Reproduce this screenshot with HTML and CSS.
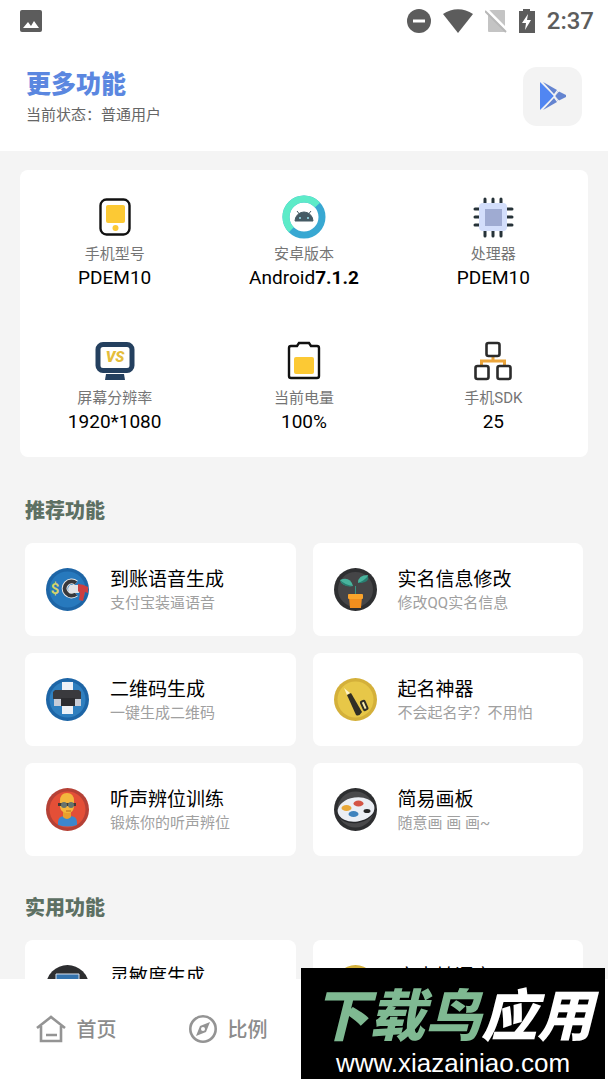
FILE: index.html
```html
<!DOCTYPE html>
<html lang="zh-CN">
<head>
  <meta charset="UTF-8">
  <meta name="viewport" content="width=device-width, initial-scale=1.0">
  <title>更多功能</title>
  <link rel="stylesheet" href="styles.css">
</head>
<body>
  <div class="status-bar">
    <svg class="status-photo" width="22" height="22" viewBox="0 0 22 22"><rect width="22" height="22" rx="2" fill="#5c5c5c"/><path d="M3 18l5-6 3 4 3-5 5 7z" fill="#fff"/></svg>
    <div class="status-icons">
      <svg width="24" height="24" viewBox="0 0 24 24"><circle cx="12" cy="12" r="12" fill="#5c5c5c"/><path d="M6 12h12" stroke="#fff" stroke-width="3"/></svg>
      <svg width="30" height="24" viewBox="0 0 30 24"><path d="M0 5C9-1.500 21-1.500 30 5L15 24z" fill="#5c5c5c"/></svg>
      <svg width="22" height="24" viewBox="0 0 22 24"><path d="M9 1h10q1 0 1 1v20q0 1-1 1H4q-1 0-1-1V4q0-3 3-3z" fill="#c4c4c4"/><path d="M1 0l22 22" stroke="#fff" stroke-width="3"/><path d="M0 2l21 21" stroke="#b8b8b8" stroke-width="2"/></svg>
      <svg width="16" height="24" viewBox="0 0 16 24"><path d="M4 0h7v2h5v22H0V2h4z" fill="#5c5c5c"/><path d="M9 5l-6 9h4l-1 7 6-10H8z" fill="#fff"/></svg>
      <span class="time">2:37</span>
    </div>
  </div>

  <header class="header">
    <div>
      <h1>更多功能</h1>
      <p>当前状态：普通用户</p>
    </div>
    <button type="button" class="play-button" aria-label="应用商店">
      <svg width="26" height="30" viewBox="0 0 26 30">
        <path d="M0 1l14 14L0 29z" fill="#5186f2"/>
        <path d="M3 1l14 8-3 4zM3 29l14-8-3-4zM18 10l8 4v2l-8 4-3-5z" fill="#6484d0"/>
        <path d="M1 0l18 20M2 29L19 10" stroke="#f3f3f3" stroke-width="1"/>
      </svg>
    </button>
  </header>

  <main class="content">
    <section class="info-card">
      <div class="info-item">
        <svg width="44" height="44" viewBox="0 0 44 44"><rect x="7.500" y="4.500" width="29" height="35" rx="6" fill="#fff" stroke="#111" stroke-width="2.400"/><rect x="13" y="10" width="19" height="18" rx="2" fill="#fcc934"/><circle cx="22.500" cy="33" r="3" fill="#fcc934"/></svg>
        <span class="info-label">手机型号</span>
        <span class="info-value">PDEM10</span>
      </div>
      <div class="info-item">
        <svg width="44" height="44" viewBox="0 0 44 44">
          <circle cx="22" cy="22" r="18" fill="none" stroke="#38a8d2" stroke-width="7"/>
          <circle cx="22" cy="22" r="18" fill="none" stroke="#5debc8" stroke-width="7" pathLength="100" stroke-dasharray="51 49" transform="rotate(135 22 22)"/>
          <path d="M13 26a9 9 0 0 1 18 0zM15 16l4 5M29 16l-4 5" fill="#455a64" stroke="#455a64" stroke-width="1"/>
          <circle cx="18" cy="23" r="1" fill="#9be4ef"/><circle cx="26" cy="23" r="1" fill="#9be4ef"/>
        </svg>
        <span class="info-label">安卓版本</span>
        <span class="info-value">Android<b>7.1.2</b></span>
      </div>
      <div class="info-item">
        <svg width="44" height="44" viewBox="0 0 44 44"><path d="M14 4v5M22 4v5M30 4v5M14 36v5M22 36v5M30 36v5M4 14h5M4 22h5M4 30h5M36 14h5M36 22h5M36 30h5" stroke="#263238" stroke-width="3" stroke-linecap="round"/><rect x="8" y="8" width="28" height="28" rx="4" fill="#d3defb"/><path d="M14 14h17v17H14z" fill="#9fabd2"/></svg>
        <span class="info-label">处理器</span>
        <span class="info-value">PDEM10</span>
      </div>
      <div class="info-item">
        <svg width="44" height="44" viewBox="0 0 44 44"><rect x="5" y="5.500" width="34" height="26" rx="5" fill="#fff" stroke="#24405f" stroke-width="5"/><path d="M13 35h18l1 6H12z" fill="#24405f"/><text x="22" y="23" text-anchor="middle" class="vs-text">VS</text></svg>
        <span class="info-label">屏幕分辨率</span>
        <span class="info-value">1920*1080</span>
      </div>
      <div class="info-item">
        <svg width="44" height="44" viewBox="0 0 44 44"><path d="M9 7h6l2-3h10l2 3h6q2 0 2 2v28q0 2-2 2H9q-2 0-2-2V9q0-2 2-2z" fill="#fff" stroke="#111" stroke-width="2.400"/><rect x="12" y="18" width="20" height="17" rx="2" fill="#fcc934"/></svg>
        <span class="info-label">当前电量</span>
        <span class="info-value">100%</span>
      </div>
      <div class="info-item">
        <svg width="44" height="44" viewBox="0 0 44 44"><path d="M22 17v5M10.500 28v-6h23v6" fill="none" stroke="#eba53b" stroke-width="3"/><g fill="#fff" stroke="#2b2b2b" stroke-width="2.600"><rect x="15.500" y="4" width="13" height="13" rx="2"/><rect x="4.500" y="27" width="13" height="13" rx="2"/><rect x="26.500" y="27" width="13" height="13" rx="2"/></g></svg>
        <span class="info-label">手机SDK</span>
        <span class="info-value">25</span>
      </div>
    </section>

    <section class="features">
      <h2>推荐功能</h2>
      <div class="feature-grid">
        <a href="#voice" class="feature-card">
          <svg width="43" height="43" viewBox="0 0 43 43"><circle cx="21.500" cy="21.500" r="21.500" fill="#1d65a6"/><circle cx="21.500" cy="21.500" r="18" fill="#2779bd"/><text x="9" y="26" text-anchor="middle" class="dollar-text">$</text><path d="M30 15a7 7 0 1 0 0 11" fill="none" stroke="#e8e8e8" stroke-width="6"/><path d="M30 15a7 7 0 1 0 0 11" fill="none" stroke="#38383b" stroke-width="4"/><path d="M24 17h9v8h-9q-4-4 0-8z" fill="#e3e3e6"/><path d="M32 16q5 0 10 3v6l-3-1-2 9-4-1 1-7-2-2z" fill="#cc3f40"/></svg>
          <div><h3>到账语音生成</h3><p>支付宝装逼语音</p></div>
        </a>
        <a href="#realname" class="feature-card">
          <svg width="43" height="43" viewBox="0 0 43 43"><circle cx="21.500" cy="21.500" r="21.500" fill="#2e2f31"/><circle cx="21.500" cy="21.500" r="17.500" fill="#454547"/><path d="M21.500 27v-9" stroke="#369483" stroke-width="1"/><path d="M19 18Q8 19 6 12q10-4 13 6z" fill="#48b39d"/><path d="M24 15q0-8 10-8 0 7-10 8z" fill="#48b39d"/><path d="M6 12q5 5 13 6-10 2-13-6zM24 15q6-2 10-7 2 7-10 7z" fill="#287d70"/><path d="M15 29h13l-1 11H16z" fill="#f18e1e"/><rect x="14" y="26" width="15" height="5" rx="1" fill="#fba42b"/></svg>
          <div><h3>实名信息修改</h3><p>修改QQ实名信息</p></div>
        </a>
        <a href="#qrcode" class="feature-card">
          <svg width="43" height="43" viewBox="0 0 43 43"><circle cx="21.500" cy="21.500" r="21.500" fill="#1d65a6"/><circle cx="21.500" cy="21.500" r="18" fill="#2f7fbf"/><path d="M8 20h27v8H8z" fill="#c7ccd7"/><path d="M9 12h24l2 2v7H7v-7z" fill="#3a3a3e"/><path d="M15 20h14v8H15z" fill="#2c2c30"/><path d="M16 4h11v8H16zM16 28h11v8H16z" fill="#edf1f7"/></svg>
          <div><h3>二维码生成</h3><p>一键生成二维码</p></div>
        </a>
        <a href="#name" class="feature-card">
          <svg width="43" height="43" viewBox="0 0 43 43"><circle cx="21.500" cy="21.500" r="21.500" fill="#d4b03a"/><circle cx="21.500" cy="21.500" r="18" fill="#e7c748"/><path d="M10 10l6 5-3 2z" fill="#fff3c4"/><path d="M13 17l4-2 11 19q-3 5-6 3z" fill="#302e25"/><rect x="28" y="23" width="4" height="9" rx="1" fill="#f6e9a8" stroke="#302e25" stroke-width="2" transform="rotate(-24 30 27)"/></svg>
          <div><h3>起名神器</h3><p>不会起名字？不用怕</p></div>
        </a>
        <a href="#listen" class="feature-card">
          <svg width="43" height="43" viewBox="0 0 43 43"><circle cx="21.500" cy="21.500" r="21.500" fill="#b54136"/><circle cx="21.500" cy="21.500" r="18" fill="#e44f37"/><path d="M12 37v-3q0-6 7-6h5q7 0 7 6v3q-9 3-19 0z" fill="#3d87cd"/><path d="M17 20h8v9q-4 4-8 0z" fill="#e9a02e"/><path d="M14 13q0-8 7-8t7 8v6q-1 6-6 6-7 0-8-6z" fill="#f3b63d"/><path d="M12 15h18v3H12z" fill="#433b35"/><circle cx="18" cy="17" r="3" fill="#65736d"/><circle cx="25" cy="17" r="3" fill="#65736d"/><path d="M20 23h5" stroke="#b56922"/></svg>
          <div><h3>听声辨位训练</h3><p>锻炼你的听声辨位</p></div>
        </a>
        <a href="#draw" class="feature-card">
          <svg width="43" height="43" viewBox="0 0 43 43"><circle cx="21.500" cy="21.500" r="21.500" fill="#2d2e30"/><circle cx="21.500" cy="21.500" r="18" fill="#49494b"/><ellipse cx="22" cy="23" rx="18.500" ry="12" fill="#26272a" transform="rotate(-8 22 23)"/><ellipse cx="22" cy="21.500" rx="18.500" ry="12" fill="#ebeef4" transform="rotate(-8 22 21)"/><ellipse cx="12.500" cy="20" rx="5" ry="3" fill="#e9a839"/><ellipse cx="24.500" cy="15.500" rx="5" ry="3" fill="#d45445"/><ellipse cx="19.500" cy="26" rx="5" ry="3" fill="#3e82bd"/><ellipse cx="33" cy="23" rx="3.500" ry="2" fill="#252526"/></svg>
          <div><h3>简易画板</h3><p>随意画 画 画~</p></div>
        </a>
      </div>
    </section>

    <section class="features">
      <h2>实用功能</h2>
      <div class="feature-grid">
        <a href="#sensitivity" class="feature-card">
          <svg width="43" height="43" viewBox="0 0 43 43"><circle cx="21.500" cy="21.500" r="21.500" fill="#2d2e30"/><path d="M10 9h23v20H10z" fill="#3473ad" stroke="#d9e2ed"/></svg>
          <div><h3>灵敏度生成</h3></div>
        </a>
        <a href="#speech" class="feature-card">
          <svg width="43" height="43" viewBox="0 0 43 43"><circle cx="21.500" cy="21.500" r="21.500" fill="#d4b03a"/><circle cx="21.500" cy="21.500" r="18" fill="#e7c748"/></svg>
          <div><h3>文本转语音</h3></div>
        </a>
      </div>
    </section>
  </main>

  <nav class="bottom-nav">
    <a href="#home">
      <svg width="30" height="28" viewBox="0 0 30 28" fill="none" stroke="#949494" stroke-width="2.600"><path d="M1 13L15 2l14 11M5 11v15h20V11M10 20h11"/></svg>
      首页
    </a>
    <a href="#scale">
      <svg width="28" height="28" viewBox="0 0 28 28"><circle cx="14" cy="14" r="12.700" fill="none" stroke="#949494" stroke-width="2.600"/><path d="M21 7l-4 10-10 4 4-10z" fill="#949494"/><circle cx="14" cy="14" r="2" fill="#fff"/></svg>
      比例
    </a>
  </nav>

  <div class="watermark">
    <strong><span>下载鸟</span>应用</strong>
    <small>www.xiazainiao.com</small>
  </div>
</body>
</html>
```

FILE: styles.css
```css
* {
  box-sizing: border-box;
}

body {
  font-family: Roboto, "Noto Sans CJK SC", sans-serif;
  background: #f4f4f4;
  color: #000;
  margin: 0;
  height: 100vh;
  display: flex;
  flex-direction: column;
}

h1, h2, h3, p {
  margin: 0;
}

a {
  color: inherit;
  text-decoration: none;
}

svg {
  display: block;
  flex-shrink: 0;
}

/* top */
.status-bar {
  display: flex;
  justify-content: space-between;
  align-items: center;
  height: 41px;
  padding: 0 14px 0 20px;
  background: #fff;
  flex-shrink: 0;
}

.status-icons {
  display: flex;
  align-items: center;
  gap: 12px;
}

.time {
  color: #5c5c5c;
  font-size: 24px;
  font-weight: 500;
  line-height: 42px;
}

.header {
  display: flex;
  justify-content: space-between;
  align-items: center;
  padding: 24px 26px;
  background: #fff;
  flex-shrink: 0;
}

.header h1 {
  margin-top: 2px;
  color: #5b87e0;
  font-size: 25px;
  font-weight: 900;
  line-height: 36px;
}

.header p {
  color: #666;
  font-size: 15px;
  line-height: 24px;
}

.play-button {
  display: flex;
  align-items: center;
  justify-content: center;
  width: 59px;
  height: 59px;
  padding: 0;
  border: none;
  border-radius: 14px;
  background: #f3f3f3;
  cursor: pointer;
}

/* device info */
.content {
  flex: 1;
  min-height: 0;
  padding: 19px 20px 0;
  overflow-y: auto;
  scrollbar-width: none;
}

.info-card {
  display: grid;
  grid-template-columns: repeat(3, 1fr);
  row-gap: 49px;
  padding: 25px 0 23px;
  margin-bottom: 40px;
  border-radius: 8px;
  background: #fff;
}

.info-item {
  display: flex;
  flex-direction: column;
  align-items: center;
}

.info-label {
  margin-top: 3px;
  color: #757575;
  font-size: 15px;
  line-height: 24px;
}

.info-value {
  font-size: 19px;
  line-height: 24px;
}

.vs-text {
  fill: #e5bd3a;
  font-size: 15px;
  font-weight: 900;
  font-style: italic;
}

.dollar-text {
  fill: #d5d36b;
  font-size: 15px;
  font-weight: 700;
}

/* feature lists */
.features {
  padding: 0 5px;
  margin-bottom: 38px;
}

.features h2 {
  margin-bottom: 18px;
  color: #5d7063;
  font-size: 20px;
  font-weight: 900;
  line-height: 28px;
}

.feature-grid {
  display: grid;
  grid-template-columns: repeat(2, 1fr);
  gap: 17px;
}

.feature-card {
  display: flex;
  align-items: flex-start;
  gap: 21px;
  height: 93px;
  padding: 25px 21px 0;
  border-radius: 8px;
  background: #fff;
}

.feature-card h3 {
  font-size: 19px;
  font-weight: 400;
  line-height: 24px;
}

.feature-card p {
  color: #a0a0a0;
  font-size: 15px;
  line-height: 22px;
}

/* bottom */
.bottom-nav {
  display: grid;
  grid-template-columns: repeat(4, 1fr);
  height: 101px;
  padding-bottom: 2px;
  background: #fff;
  flex-shrink: 0;
}

.bottom-nav a {
  display: flex;
  align-items: center;
  justify-content: center;
  gap: 11px;
  color: #8c8c8c;
  font-size: 20px;
  font-weight: 500;
}

.watermark {
  position: fixed;
  right: 3px;
  bottom: 1px;
  width: 50%;
  height: 111px;
  padding-top: 18px;
  background: #000;
  color: #fff;
  text-align: center;
  white-space: nowrap;
}

.watermark strong {
  display: block;
  font-size: 56px;
  font-style: italic;
  font-weight: 900;
  line-height: 62px;
}

.watermark span {
  color: #7fb992;
}

.watermark small {
  display: block;
  font-family: "Liberation Sans", Arial, sans-serif;
  font-size: 26px;
  line-height: 30px;
}
```
